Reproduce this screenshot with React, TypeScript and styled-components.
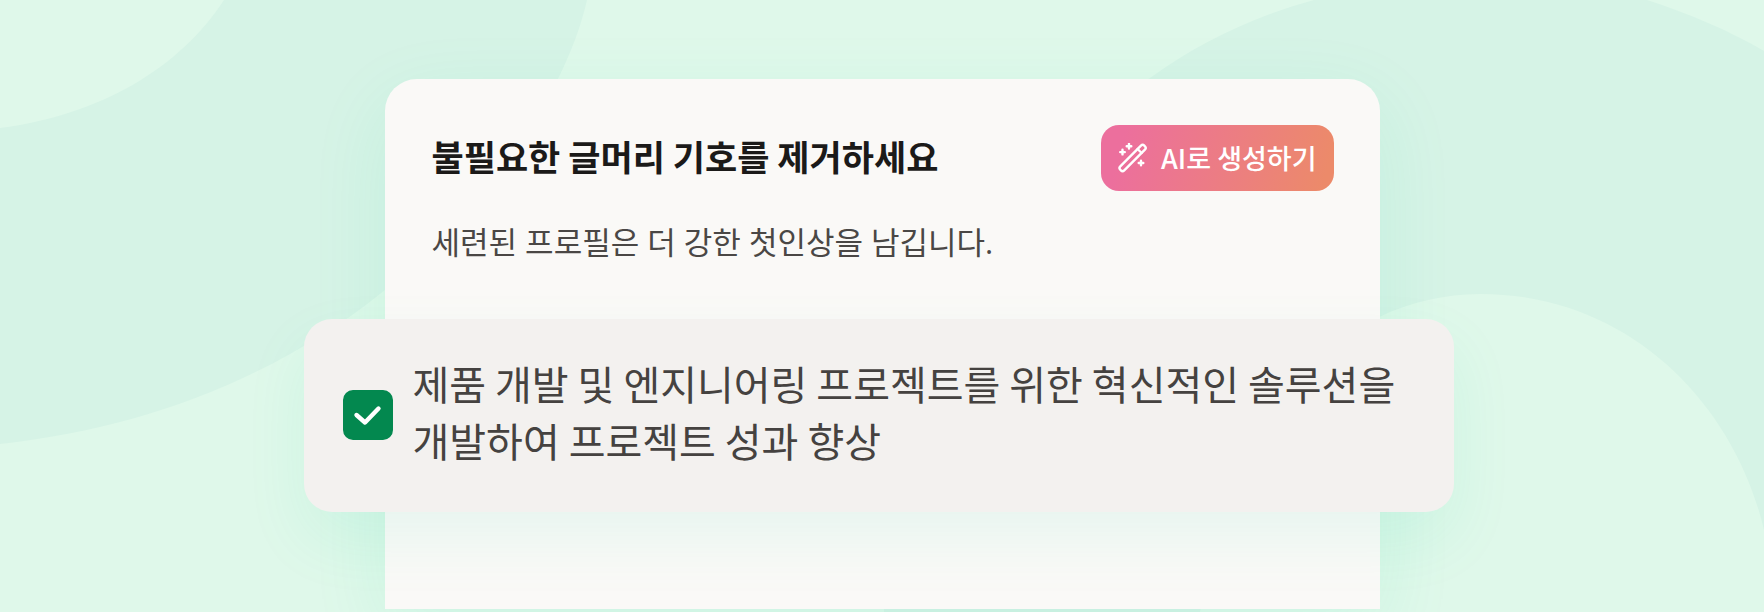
import React, { useState } from "react";
import styled, { createGlobalStyle } from "styled-components";

const GlobalStyle = createGlobalStyle`
  *, *::before, *::after { box-sizing: border-box; }
  body {
    margin: 0;
    background: #d6f3e6;
    font-family: "Noto Sans CJK KR", "Noto Sans", sans-serif;
  }
`;

const Page = styled.main`
  position: relative;
  overflow: hidden;
  min-height: 100vh;
  padding: 79px 90px 3px;
  display: flex;
  flex-direction: column;
  align-items: center;
`;

const Backdrop = styled.svg`
  position: absolute;
  inset: 0;
  width: 100%;
  height: 100%;
`;

const Card = styled.section`
  position: relative;
  width: 100%;
  max-width: 995px;
  padding-bottom: 97px;
  border-radius: 32px 32px 0 0;
  background: #faf9f7;
  box-shadow: 0 24px 80px rgba(0, 210, 150, 0.09);
`;

const CardIntro = styled.div`
  padding: 46px 46px 50px 47px;
`;

const TitleRow = styled.header`
  display: flex;
  align-items: center;
  justify-content: space-between;
  gap: 24px;
  margin-bottom: 24px;
`;

const Title = styled.h2`
  margin: 0;
  padding-bottom: 4px;
  font-size: 35px;
  font-weight: 700;
  line-height: 52px;
  color: #1b1a19;
`;

const GenerateButton = styled.button`
  display: flex;
  align-items: center;
  gap: 13px;
  height: 66px;
  padding: 0 17px;
  border: 0;
  border-radius: 18px;
  background: linear-gradient(105deg, #ec6f9d 10%, #ec8a6a 95%);
  color: #fff;
  font-family: inherit;
  font-size: 27px;
  font-weight: 500;
  line-height: 40px;
  white-space: nowrap;
  cursor: pointer;
`;

const Description = styled.p`
  margin: 0;
  font-family: "Open Sans", "Noto Sans CJK KR", sans-serif;
  font-size: 31px;
  line-height: 54px;
  color: #4a4745;
`;

const BulletPanel = styled.label`
  position: relative;
  display: flex;
  align-items: center;
  gap: 20px;
  margin: 0 -74px 0 -81px;
  padding: 36px 39px 37px;
  border-radius: 28px;
  background: #f3f1ef;
  box-shadow: 0 28px 64px rgba(0, 210, 150, 0.08);
  cursor: pointer;
`;

const CheckWrap = styled.span`
  position: relative;
  flex: none;
  display: flex;
`;

const CheckInput = styled.input`
  appearance: none;
  width: 50px;
  height: 50px;
  margin: 0;
  border-radius: 10px;
  border: 2px solid #03884f;
  background: #fff;

  &:checked {
    background: #03884f;
  }
`;

const CheckMark = styled.svg`
  position: absolute;
  inset: 0;
  pointer-events: none;
`;

const BulletText = styled.span`
  padding-bottom: 6px;
  font-size: 40px;
  line-height: 57px;
  color: #454240;
  word-break: keep-all;
`;

function WandIcon() {
  return (
    <svg
      width="30"
      height="30"
      viewBox="0 0 30 30"
      fill="none"
      stroke="currentColor"
      strokeWidth="2.4"
      strokeLinecap="round"
      strokeLinejoin="round"
      aria-hidden="true"
    >
      <rect x="-2.8" y="-17" width="5.6" height="34" rx="2.4" transform="translate(14.6 15) rotate(45)" />
      <path d="M19.6 6l4 4" />
      <path d="M4.5 6.800v4.600M2.200 9.100h4.600M11 .9v4.600M8.700 3.200h4.600M23 17.700v4.600M20.700 20h4.600" />
    </svg>
  );
}

export default function App() {
  const [checked, setChecked] = useState(true);

  return (
    <>
      <GlobalStyle />
      <Page>
        <Backdrop viewBox="0 0 1764 612" preserveAspectRatio="xMidYMid slice" fill="#dff8ea" aria-hidden="true">
          <path d="M0 0H224C180 68 100 115 0 128Z" />
          <path d="M0 444C120 431 230 394 325 333C440 262 560 120 587 0H1314C1255 16 1200 42 1150 78C960 200 880 400 884 612H0Z" />
          <path d="M1200 612C1220 500 1260 430 1300 380C1340 327 1410 294 1480 294C1630 294 1735 405 1764 530V612Z" />
          <path d="M1647 0C1690 14 1728 30 1764 51V0Z" />
        </Backdrop>
        <Card>
          <CardIntro>
            <TitleRow>
              <Title>불필요한 글머리 기호를 제거하세요</Title>
              <GenerateButton type="button">
                <WandIcon />
                AI로 생성하기
              </GenerateButton>
            </TitleRow>
            <Description>세련된 프로필은 더 강한 첫인상을 남깁니다.</Description>
          </CardIntro>
          <BulletPanel>
            <CheckWrap>
              <CheckInput type="checkbox" checked={checked} onChange={(e) => setChecked(e.target.checked)} />
              {checked && (
                <CheckMark viewBox="0 0 50 50" aria-hidden="true">
                  <path
                    d="M13.500 25L22 32.500L35.500 18.500"
                    fill="none"
                    stroke="#fff"
                    strokeWidth="4.4"
                    strokeLinecap="round"
                    strokeLinejoin="round"
                  />
                </CheckMark>
              )}
            </CheckWrap>
            <BulletText>
              제품 개발 및 엔지니어링 프로젝트를 위한 혁신적인 솔루션을 개발하여 프로젝트 성과 향상
            </BulletText>
          </BulletPanel>
        </Card>
      </Page>
    </>
  );
}
